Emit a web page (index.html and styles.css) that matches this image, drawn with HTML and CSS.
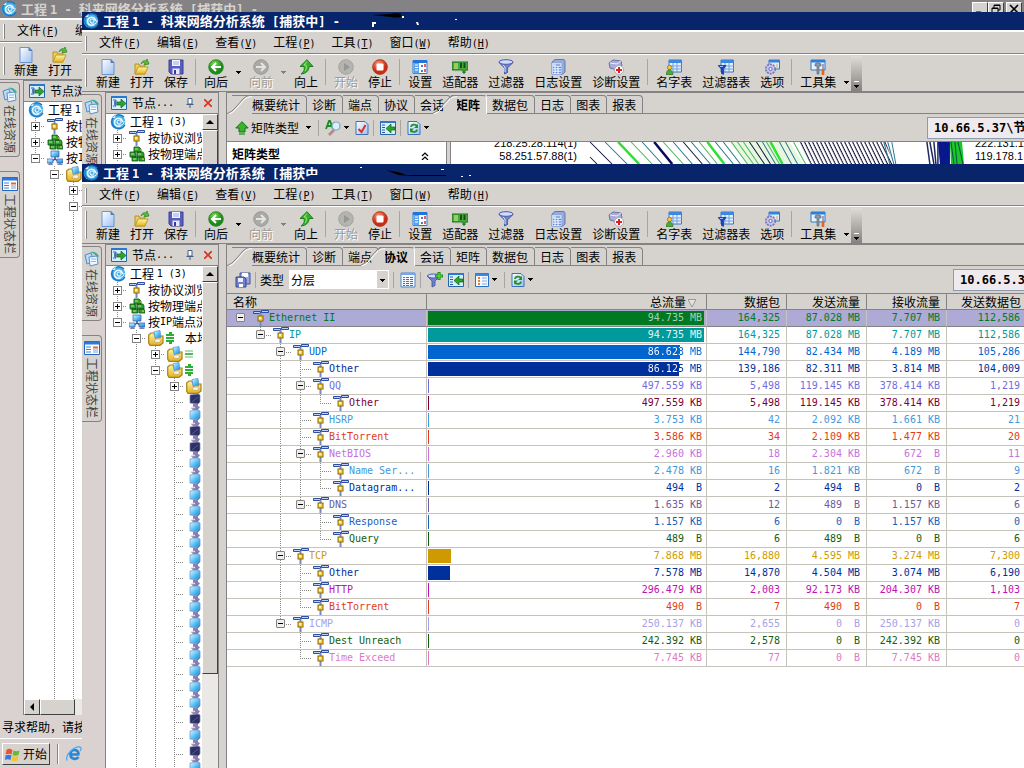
FILE: index.html
```html
<!DOCTYPE html>
<html lang="zh-CN">
<head>
<meta charset="utf-8">
<title>科来网络分析系统</title>
<link rel="stylesheet" href="styles.css">
</head>
<body>
<svg class="defs" aria-hidden="true">
<defs>
<linearGradient id="gs" x1="0" y1="0" x2="1" y2="1"><stop offset="0" stop-color="#e8fbff"/><stop offset=".5" stop-color="#5cc4f4"/><stop offset="1" stop-color="#2a78d0"/></linearGradient>
<linearGradient id="gp" x1="0" y1="0" x2="1" y2="1"><stop offset="0" stop-color="#fff"/><stop offset="1" stop-color="#9cc0f4"/></linearGradient>
<radialGradient id="gg" cx=".4" cy=".3"><stop offset="0" stop-color="#7ee04e"/><stop offset="1" stop-color="#1c8a1c"/></radialGradient>
<radialGradient id="gr" cx=".4" cy=".3"><stop offset="0" stop-color="#ff9a78"/><stop offset="1" stop-color="#cc2c14"/></radialGradient>
<linearGradient id="gy" x1="0" y1="0" x2="0" y2="1"><stop offset="0" stop-color="#fff6a8"/><stop offset="1" stop-color="#e4b01c"/></linearGradient>
<pattern id="hatch" width="4" height="22" patternUnits="userSpaceOnUse" patternTransform="translate(0 142) skewX(26)"><path d="M1 0v22" stroke="#181840" stroke-width="1.200"/></pattern>
</defs>
<symbol id="logo" viewBox="0 0 16 16"><circle cx="8" cy="8" r="7.3" fill="#49aee8"/><path d="M14 3a7 7 0 1 0 1 8" fill="none" stroke="#1878c4" stroke-width="1.4"/><path d="M12.5 8a4 4 0 1 0-1.5 3.4" fill="none" stroke="#e8faff" stroke-width="1.6"/><path d="M7 8a2 2 0 1 1 4 0 2 2 0 0 1-4 0c1 5 7 4 7-1" fill="none" stroke="#e8faff"/><path d="M2 4l4-3-1 3z" fill="#d8f4ff"/></symbol>
<symbol id="new" viewBox="0 0 16 16"><path d="M2 .5h9l3 3v12H2z" fill="url(#gp)" stroke="#6c94c8"/><path d="M11 .5v3h3" fill="#5c88c8" stroke="#5078b0"/></symbol>
<symbol id="open" viewBox="0 0 16 16"><path d="M1 5h4l1 2h5v8H1z" fill="#e8d060" stroke="#b89020"/><path d="M1 15l3-7h10l-3 7z" fill="url(#gy)" stroke="#c09c28"/><path d="M7 5c1-3 3-4 5-3l1-2 2 5-5 1 1-2c-2-1-3 0-4 1z" fill="#58c030" stroke="#28801c" stroke-width=".7"/></symbol>
<symbol id="save" viewBox="0 0 16 16"><path d="M1 1h14v14H3l-2-2z" fill="#5a5cc0" stroke="#3c3c94"/><path d="M4 1h8v6H4z" fill="#f0f4ff"/><path d="M5 3h6M5 5h6" stroke="#a0a8d8"/><path d="M4.500 9.500h7V15h-7z" fill="#e4e8fc"/><path d="M6 11h2v4H6z" fill="#3c3c94"/></symbol>
<symbol id="back" viewBox="0 0 16 16"><circle cx="8" cy="8" r="7.3" fill="url(#gg)" stroke="#287c20" stroke-width=".8"/><path d="M13 8H4M8 4L4 8l4 4" stroke="#fff" stroke-width="2" fill="none"/></symbol>
<symbol id="fwd" viewBox="0 0 16 16"><circle cx="8" cy="8" r="7.3" fill="#a9a9a7" stroke="#999"/><path d="M3 8h9M8 4l4 4-4 4" stroke="#e4e4e0" stroke-width="2" fill="none"/></symbol>
<symbol id="up" viewBox="0 0 16 16"><path d="M9 .7L2 7.500h4c.8 3 0 5-3 7.500 5-.5 8-3 8-7.500h4z" fill="#34b42c" stroke="#177018" stroke-width=".9"/><path d="M9 2.500L6 6h2c1 3 0 5-1 6" stroke="#98ec70" fill="none"/></symbol>
<symbol id="play" viewBox="0 0 16 16"><circle cx="8" cy="8" r="7.3" fill="#b4b4b1" stroke="#a4a4a2"/><path d="M6 4l6 4-6 4z" fill="#979795"/></symbol>
<symbol id="stop" viewBox="0 0 16 16"><circle cx="8" cy="8" r="7.4" fill="url(#gr)" stroke="#a83820" stroke-width=".8"/><rect x="4.500" y="4.500" width="7" height="7" rx="1" fill="#fff"/></symbol>
<symbol id="settings" viewBox="0 0 16 16"><path d="M1 1.500h14v13H1z" fill="#fff" stroke="#2878d4"/><path d="M1 1h14v3H1z" fill="#2074dc"/><path d="M1.500 4H7v10.500H1.500z" fill="#58a4f0"/><path d="M3 6h3M3 8.500h3M3 11h3" stroke="#fff"/><path d="M9 6h2v2H9zM9 11h2v2H9z" fill="#487cc8"/><path d="M12 5h2v3h-2zM12 10h2v3h-2z" fill="#e46058"/></symbol>
<symbol id="adapter" viewBox="0 0 16 16"><path d="M0 3h16v8h-3v3h-2v-3H0z" fill="#48ac38" stroke="#1c6c1c"/><path d="M2 5h4M2 7h4M2 9h4" stroke="#e0f090"/><path d="M8 4h2v5H8zM11.500 4h2v5h-2z" fill="#174c1c"/><path d="M3 12h7" stroke="#c8b030" stroke-dasharray="1 1"/></symbol>
<symbol id="filter" viewBox="0 0 16 16"><path d="M1 3.500L6.500 9v6l3-1.500V9L15 3.500z" fill="#6c84d0" stroke="#3c4c9c" stroke-width=".8"/><ellipse cx="8" cy="3" rx="7" ry="2.300" fill="#cfdcff" stroke="#4858a8"/><path d="M5 6l2 2v5" stroke="#d8e4ff" fill="none"/></symbol>
<symbol id="log" viewBox="0 0 16 16"><path d="M2 3l3-2.500h9L15 2v11l-3 2.500H2z" fill="#94acdc" stroke="#5068a4" stroke-width=".8"/><path d="M2 4h9.500v11.500H2z" fill="#c4d8fc"/><path d="M4 6h6M3 8.500h8M3 11h8M3 13.500h8" stroke="#6484c8"/><path d="M5 5v10M8 7v8" stroke="#fff"/></symbol>
<symbol id="diag" viewBox="0 0 16 16"><path d="M1 4l4-3 8 1 1 5-5 4-7-2z" fill="#a8acd8" stroke="#6c70a8"/><path d="M2 4l7 1 4-3" stroke="#eef" fill="none"/><circle cx="11" cy="11" r="4.500" fill="#fff" stroke="#a8a8b0"/><path d="M11 8v6M8 11h6" stroke="#e02020" stroke-width="2"/></symbol>
<symbol id="grid" viewBox="0 0 16 16"><path d="M3 1h12.500v12H3z" fill="#e4f0ff" stroke="#3c74c4"/><path d="M3 1h13v3H3z" fill="#3c88e0"/><path d="M3 7h13M3 10h13M7 4v9M11 4v9" stroke="#70a0dc"/></symbol>
<symbol id="names" viewBox="0 0 16 16"><use href="#grid"/><circle cx="3.500" cy="8.500" r="2.200" fill="#f0c848" stroke="#786010" stroke-width=".6"/><path d="M0 15.500c0-6 7-6 7 0z" fill="#4cac2c" stroke="#206418" stroke-width=".6"/></symbol>
<symbol id="ftable" viewBox="0 0 16 16"><use href="#grid"/><path d="M0 6.500h8L5.500 10v5.500l-2-1V10z" fill="#2040c4" stroke="#102078" stroke-width=".6"/><path d="M2 7.500h3" stroke="#a0c0ff"/></symbol>
<symbol id="options" viewBox="0 0 16 16"><path d="M5 1h10.500v9H5z" fill="#dcebff" stroke="#3c78c8"/><path d="M5 1h10.500v2.500H5z" fill="#3880dc"/><path d="M12 6h2M12 8h2" stroke="#e0b030"/><circle cx="6.500" cy="10" r="4.700" fill="#c4c4ec" stroke="#7474b4" stroke-width="1.600" stroke-dasharray="2 1"/><circle cx="6.500" cy="10" r="1.600" fill="#fff" stroke="#6464a8"/></symbol>
<symbol id="tools" viewBox="0 0 16 16"><path d="M1 1h14v10H1z" fill="#e4f2ff" stroke="#2c78cc"/><path d="M1 1h14v2.500H1z" fill="#2c80dc"/><path d="M5 5c2-2 5-1 6 0v2H9v8H7V7L5 7z" fill="#8c98a8" stroke="#505c6c" stroke-width=".6"/><path d="M13 5v5" stroke="#889" stroke-width="1.500"/><path d="M13 10v6" stroke="#e46420" stroke-width="2.600"/></symbol>
<symbol id="node" viewBox="0 0 16 14"><path d="M.5.5h15v13H.5z" fill="#d4f0ff" stroke="#2864a8"/><path d="M.5 1h15" stroke="#2c78d0" stroke-width="2"/><path d="M2 4h3v2H3h2v2H3h2v2H2" stroke="#2c58a8" fill="none"/><path d="M6 6h4V3l5 4.500L10 12V9H6z" fill="#2ca42c" stroke="#146414" stroke-width=".7"/></symbol>
<symbol id="import" viewBox="0 0 16 14"><path d="M.5.5h15v13H.5z" fill="#d4f0ff" stroke="#2864a8"/><path d="M.5 1h15" stroke="#2c78d0" stroke-width="2"/><path d="M2 4h3M2 6.500h3M2 9h3M2 11.500h3" stroke="#2c58a8"/><path d="M15 6h-4V3L6 7.500 11 12V9h4z" fill="#2ca42c" stroke="#146414" stroke-width=".7"/></symbol>
<symbol id="proto" viewBox="0 0 16 16"><path d="M.5 1.500h7v2h-7zM8.500.5h7v2h-7z" fill="#b8d4fc" stroke="#1c3c94" stroke-width=".9"/><path d="M7.500 3v3M7.500 11v5" stroke="#7888c4" stroke-width="2"/><rect x="5" y="6" width="5" height="5" fill="#f8d038" stroke="#8c6808"/><path d="M6 7h2v2H6z" fill="#fff4a8"/></symbol>
<symbol id="phys" viewBox="0 0 16 16"><g fill="#34a034" stroke="#0c500c" stroke-width=".8"><path d="M5 1h5l2 2v3H5zM1 6h5l1 2v3H1zM8 6h6l1 2v3H8zM3 11h6v4H3zM10 11h5l1 4h-6z"/></g><path d="M6 3h3M2 8h3M9 8h3M4 13h3" stroke="#a8f08c"/><path d="M13 13h2M11 4h1" stroke="#e4e040"/></symbol>
<symbol id="ipn" viewBox="0 0 16 16"><path d="M8 6v4M4 12l4-3 4 3" stroke="#444c94" stroke-width="1.500" fill="none"/><path d="M4 1h8v6H4z" fill="url(#gs)" stroke="#4468b4" stroke-width=".8"/><path d="M0 9h6v4H0zM10 9h6v4h-6z" fill="url(#gs)" stroke="#4468b4" stroke-width=".8"/><path d="M1 15h5l-1-2H2zM10 15h6l-2-2h-2z" fill="#8080b4"/></symbol>
<symbol id="folder" viewBox="0 0 16 16"><path d="M.7 5L3 3h3l1 3h8v7l-3 2.300H2L.7 13z" fill="url(#gy)" stroke="#ac8010" stroke-width="1.200"/><path d="M6 1.500l6-1 1 7-6 1z" fill="url(#gs)" stroke="#5c90cc" stroke-width=".7"/><path d="M6 12c1-4 6-4 7-1l-2 1.500z" fill="#f6f1e4" stroke="#b89c58" stroke-width=".6"/></symbol>
<symbol id="pc" viewBox="0 0 12 16"><path d="M1 1l8-1 2 1v7l-2 2-8-1z" fill="url(#gs)" stroke="#6490cc" stroke-width=".7"/><path d="M4 10h5v2l2 1-2 3H4l-2-2 2-1z" fill="#8880ac"/><path d="M3 13.500h3" stroke="#e4d8f4" stroke-width="1.500"/></symbol>
<symbol id="pcd" viewBox="0 0 12 16"><path d="M1 1l8-1 2 1v7l-2 2-8-1z" fill="#2c3064" stroke="#7c80b0" stroke-width=".7"/><path d="M3 8l6-5" stroke="#565c94"/><path d="M4 10h5v2l2 1-2 3H4l-2-2 2-1z" fill="#8880ac"/><path d="M3 13.500h3" stroke="#e4d8f4" stroke-width="1.500"/></symbol>
<symbol id="sig" viewBox="0 0 10 14"><path d="M4 1h3v2h2v2H1V3h3zM1 6h8v2H1zM1 9h8v2H7v2H4v-2H1z" fill="#2cb034"/></symbol>
<symbol id="sig2" viewBox="0 0 10 14"><path d="M1 3h8v2H1zM1 9h8v2H1z" fill="#b4dcbc"/><path d="M1 6h8v2H1z" fill="#50b85c"/></symbol>
<symbol id="docs" viewBox="0 0 16 16"><path d="M1 4l6-2 3 8-7 3z" fill="#b8dcfc" stroke="#5888bc"/><path d="M5 6l8-1 1 8-8 2z" fill="#eef7ff" stroke="#5c90c4"/><path d="M6 1c4-1 8 1 9 5l-3-1c-1-2-3-3-6-4z" fill="#38aca4"/><path d="M7 8h5M7 10.500h5" stroke="#94b8dc"/></symbol>
<symbol id="layout" viewBox="0 0 16 14"><path d="M.5.5h15v13H.5z" fill="#fff" stroke="#2464bc"/><path d="M.5.5h15v3H.5z" fill="#2c78dc"/><path d="M2 6h5M2 8.500h5M2 11h5" stroke="#3c84d8"/><path d="M9 5.500h5v2H9z" fill="#e46434"/><path d="M9 9h5M9 11h5" stroke="#70a4e0"/></symbol>
<symbol id="pin" viewBox="0 0 8 10"><path d="M2 .5h4V6H2zM.5 6.500h7M4 7v3" fill="#fff" stroke="#425e88"/></symbol>
<symbol id="x" viewBox="0 0 8 8"><path d="M0 0l8 8M8 0L0 8" stroke="#d83420" stroke-width="1.700"/></symbol>
<symbol id="gup" viewBox="0 0 14 14"><path d="M7 .7L.8 7H4v4h6V7h3.200z" fill="#38b428" stroke="#187018"/><path d="M4 13h6" stroke="#38a030" stroke-width="1.500"/></symbol>
<symbol id="find" viewBox="0 0 16 16"><path d="M1 9l3-8h1l3 8M2.500 6h4" fill="none" stroke="#188c24" stroke-width="1.800"/><path d="M9 10l-5 5" stroke="#b08888" stroke-width="2.600"/><circle cx="11" cy="6" r="4" fill="#d8f2fc" stroke="#7ca4bc" stroke-width="1.200"/></symbol>
<symbol id="check" viewBox="0 0 13 14"><path d="M.5.5h9l3 3v10H.5z" fill="url(#gp)" stroke="#3c70bc"/><path d="M3 8l3 3 4-7" fill="none" stroke="#e03020" stroke-width="2"/></symbol>
<symbol id="refresh" viewBox="0 0 13 14"><path d="M.5.5h9l3 3v10H.5z" fill="url(#gp)" stroke="#3c70bc"/><path d="M3.500 6c0-3 5-3 6-1M9.500 8.500c0 3-5 3-6 1" fill="none" stroke="#1c9424" stroke-width="1.700"/><path d="M10.500 3v4h-4zM2.500 11.500v-4h4z" fill="#1c9424"/></symbol>
<symbol id="copysave" viewBox="0 0 16 16"><path d="M5 1h10v11H5z" fill="#98a8e0" stroke="#404c9c"/><path d="M7 1h6v4H7z" fill="#fff"/><path d="M1 5h8l2 2v8H1z" fill="#7080cc" stroke="#38448c"/><path d="M3 6h5v4H3z" fill="#eaf0ff"/><path d="M4 12h4v3H4z" fill="#fff"/></symbol>
<symbol id="list" viewBox="0 0 16 16"><path d="M1 1h14v14H1z" fill="#f4faff" stroke="#5084c8"/><path d="M1 1h14v2H1z" fill="#74a8ec"/><path d="M3 5.500h2M3 7.500h2M3 9.500h2M3 11.500h2M3 13.500h2M6 5.500h3M6 7.500h3M6 9.500h3M6 11.500h3M6 13.500h3M10 5.500h3M10 7.500h3M10 9.500h3M10 11.500h3M10 13.500h3" stroke="#2c80b0"/></symbol>
<symbol id="filterp" viewBox="0 0 16 16"><path d="M0 4l5 5v6l3-1.500V9l5-5z" fill="#6c84d0" stroke="#3c4c9c" stroke-width=".8"/><ellipse cx="6.500" cy="4" rx="6" ry="2" fill="#cfdcff" stroke="#4858a8"/><path d="M12 0v8M8 4h8" stroke="#1c9420" stroke-width="3.200"/><path d="M12 1v6M9 4h6" stroke="#70e048"/></symbol>
<symbol id="cols" viewBox="0 0 14 14"><path d="M.5.5h13v13H.5z" fill="#f4faff" stroke="#2c70c4"/><path d="M.5.5h13v2.500H.5z" fill="#3c88e4"/><path d="M3 5h2M3 8h2M3 11h2" stroke="#e4803c" stroke-width="2"/><path d="M7 5h5M7 8h5M7 11h5" stroke="#84a8d8"/></symbol>
<symbol id="ie" viewBox="0 0 16 16"><path d="M13.500 8.500H4.500c0 5 6 5.500 8 2.500" fill="none" stroke="#2488d8" stroke-width="2.600"/><path d="M4.500 8.500c0-6 8-6 8-.5" fill="none" stroke="#2488d8" stroke-width="2.600"/><path d="M1 14.500C-1 9 8 0 14 1c2 1 1 3 0 4" fill="none" stroke="#4ca8ec" stroke-width="1.300"/></symbol>
<symbol id="flag" viewBox="0 0 16 16"><path d="M1.500 4c2-2 4-1 6 0L6.500 8.500c-2-1-4-1-6 0z" fill="#e8552c"/><path d="M8.500 4.500c2 1 4 1 6 0L13.500 9c-2 1-4 1-6 0z" fill="#68b838"/><path d="M.5 9.500c2-1 4-1 6 0L5.500 14c-2-1-4-1-5.500 0z" fill="#3878dc"/><path d="M7.500 10c2 1 4 1 6 0l-1 4.500c-2 1-4 1-6 0z" fill="#f4c428"/></symbol>
<symbol id="slope" viewBox="0 0 24 19"><path d="M14 19V9l5-7 5-1v18z" fill="#d6d3ce"/><path d="M0 18.500h24" stroke="#d6d3ce"/><path d="M0 18Q4 17 7 13L16 3Q18 .5 24 .5" fill="none" stroke="#848284"/><path d="M1 19Q5 18 8 14L17 4Q19 1.500 24 1.500" fill="none" stroke="#fff"/></symbol>
</svg>

<main class="desktop">

<section class="win win-back">
  <header class="title"><svg class="i16"><use href="#logo"/></svg><h1>工程 <span>1 - </span>科来网络分析系统<span> [</span>捕获中<span>] -</span></h1>
    <div class="sysbtns"><button aria-label="最小化"><svg viewBox="0 0 10 10"><path d="M1 8.500h5" stroke="#000" stroke-width="2"/></svg></button><button aria-label="还原"><svg viewBox="0 0 10 10"><path d="M3 1h6v5H7M3 1.500h6M1 4h6v5H1zM1 4.500h6M3 1v3" stroke="#000" fill="none"/></svg></button><button class="gap" aria-label="关闭"><svg viewBox="0 0 10 10"><path d="M1 1l8 8M9 1L1 9" stroke="#000" stroke-width="1.600"/></svg></button></div>
  </header>
  <nav class="menu"><button>文件<span>(<u>F</u>)</span></button><button>编辑<span>(<u>E</u>)</span></button></nav>
  <div class="tools"><button><svg class="i16"><use href="#new"/></svg>新建</button><button><svg class="i16"><use href="#open"/></svg>打开</button></div>
  <div class="work">
    <aside class="side"><button><svg class="i16"><use href="#docs"/></svg><span>在线资源</span></button><button><svg class="i16"><use href="#layout"/></svg><span>工程状态栏</span></button></aside>
    <section class="panel wide">
      <h2><svg class="i16"><use href="#node"/></svg>节点浏览器</h2>
      <div class="scroller">
      <ul class="tree">
        <li class="root"><svg class="i16"><use href="#logo"/></svg>工程&nbsp;<span class="m">1</span></li>
        <li><i class="t"><button class="ex plus" aria-label="展开"></button></i><svg class="i16"><use href="#proto"/></svg>按协议浏览</li>
        <li><i class="t"><button class="ex plus" aria-label="展开"></button></i><svg class="i16"><use href="#phys"/></svg>按物理端点</li>
        <li><i class="l"><button class="ex" aria-label="折叠"></button></i><svg class="i16"><use href="#ipn"/></svg>按<span class="m">IP</span>端点浏览</li>
        <li><i></i><i class="t"><button class="ex" aria-label="折叠"></button></i><svg class="i16"><use href="#folder"/></svg></li>
        <li><i></i><i class="v"></i><i class="t"><button class="ex plus" aria-label="展开"></button></i></li>
        <li><i></i><i class="v"></i><i class="t"><button class="ex" aria-label="折叠"></button></i></li>
        <li class="rest"><i></i><i class="v"></i><i class="v"></i></li>
      </ul>
      <div class="hscroll"><button class="arrow" aria-label="向左滚动"><svg viewBox="0 0 8 8"><path d="M6 0v8L2 4z"/></svg></button><span class="thumb"></span></div>
      </div>
    </section>
  </div>
  <footer class="status">寻求帮助，请按</footer>
</section>

<footer class="taskbar"><button class="start"><svg class="i16"><use href="#flag"/></svg>开始</button><span class="handle"></span><svg class="i16"><use href="#ie"/></svg></footer>

<section class="win win-matrix">
  <header class="title"><svg class="i16"><use href="#logo"/></svg><h1>工程 <span>1 - </span>科来网络分析系统<span> [</span>捕获中<span>] -</span></h1>
    <svg class="marks" width="130" height="18" viewBox="0 0 130 18"><path d="M32 3l18-1q8-2 11 0v3q-6 1-10 0z" fill="#000"/><path d="M32 10h4v2h-2v3h-2zM62 4h2v2h-2zM76 10h2l1 3h-2zM115 7h2v1h-2z" fill="#fff"/></svg>
  </header>
  <nav class="menu"><button>文件<span>(<u>F</u>)</span></button><button>编辑<span>(<u>E</u>)</span></button><button>查看<span>(<u>V</u>)</span></button><button>工程<span>(<u>P</u>)</span></button><button>工具<span>(<u>T</u>)</span></button><button>窗口<span>(<u>W</u>)</span></button><button>帮助<span>(<u>H</u>)</span></button></nav>
  <div class="tools">
    <button><svg class="i16"><use href="#new"/></svg>新建</button><button><svg class="i16"><use href="#open"/></svg>打开</button><button><svg class="i16"><use href="#save"/></svg>保存</button><hr>
    <button><svg class="i16"><use href="#back"/></svg>向后</button><b class="drop"></b><button disabled><svg class="i16"><use href="#fwd"/></svg>向前</button><b class="drop off"></b><button><svg class="i16"><use href="#up"/></svg>向上</button><hr>
    <button disabled><svg class="i16"><use href="#play"/></svg>开始</button><button><svg class="i16"><use href="#stop"/></svg>停止</button><hr>
    <button><svg class="i16"><use href="#settings"/></svg>设置</button><button><svg class="i16"><use href="#adapter"/></svg>适配器</button><button><svg class="i16"><use href="#filter"/></svg>过滤器</button><button><svg class="i16"><use href="#log"/></svg>日志设置</button><button><svg class="i16"><use href="#diag"/></svg>诊断设置</button><hr>
    <button><svg class="i16"><use href="#names"/></svg>名字表</button><button><svg class="i16"><use href="#ftable"/></svg>过滤器表</button><button><svg class="i16"><use href="#options"/></svg>选项</button><hr>
    <button><svg class="i16"><use href="#tools"/></svg>工具集</button><b class="drop"></b><span class="more"></span>
  </div>
  <div class="work">
    <aside class="side"><button><svg class="i16"><use href="#docs"/></svg><span>在线资源</span></button></aside>
    <section class="panel">
      <h2><svg class="i16"><use href="#node"/></svg>节点<span class="m">...</span><svg class="pin"><use href="#pin"/></svg><svg class="x"><use href="#x"/></svg></h2>
      <div class="scroller row">
      <ul class="tree">
        <li class="root"><svg class="i16"><use href="#logo"/></svg>工程&nbsp;<span class="m">1 (3)</span></li>
        <li><i class="t"><button class="ex plus" aria-label="展开"></button></i><svg class="i16"><use href="#proto"/></svg>按协议浏览</li>
        <li><i class="t"><button class="ex plus" aria-label="展开"></button></i><svg class="i16"><use href="#phys"/></svg>按物理端点</li>
      </ul>
      <div class="vscroll"><button class="arrow" aria-label="向上滚动"><svg viewBox="0 0 8 8"><path d="M0 6h8L4 2z"/></svg></button><span class="thumb"></span></div>
      </div>
    </section>
    <section class="pane">
      <nav class="tabs"><button class="first"><svg class="slant"><use href="#slope"/></svg>概要统计</button><button>诊断</button><button>端点</button><button>协议</button><button>会话</button><button class="sel"><svg class="slant"><use href="#slope"/></svg>矩阵</button><button>数据包</button><button>日志</button><button>图表</button><button>报表</button></nav>
      <div class="bar2">
        <svg class="i14"><use href="#gup"/></svg><span>矩阵类型</span><b class="drop"></b><hr><svg class="i16"><use href="#find"/></svg><b class="drop"></b><svg class="i14"><use href="#check"/></svg><hr><svg class="i16"><use href="#import"/></svg><hr><svg class="i14"><use href="#refresh"/></svg><b class="drop"></b>
        <div class="addr">10.66.5.37\节</div>
      </div>
      <div class="split">
        <h3 class="mtype">矩阵类型<svg class="chev" viewBox="0 0 8 8"><path d="M1 4l3-3 3 3M1 8l3-3 3 3" fill="none" stroke="#000" stroke-width="1.200"/></svg></h3>
        <div class="matrix">
          <ul class="hosts right"><li>218.25.28.114(1)</li><li>58.251.57.88(1)</li></ul>
          <svg class="lines" viewBox="590 142 380 22" preserveAspectRatio="none">
            <path d="M730 142h60l14 22h-56z" fill="#e8f8e0"/>
            <path d="M591 142l22 22M591 157l7 7M684 142l19 22M750 142l15 22M757 142l14 22" stroke="#181840" fill="none"/>
            <path d="M606 142l22 22M643 142l20 22M674 142l19 22M692 142l19 22M716 142l18 22M724 142l17 22M763 142l13 22M780 142l12 22M786 142l12 22" stroke="#2c7890" fill="none"/>
            <path d="M632 142l21 22M664 142l20 22M700 142l18 22M732 142l16 22M738 142l16 22M744 142l15 22M767 142l13 22M794 142l12 22" stroke="#48b858" fill="none"/>
            <path d="M619 142l21 22M708 142l17 22M771 142l12 22" stroke="#30e030" stroke-width="2.500" fill="none"/>
            <path d="M655 142l18 22" stroke="#080c58" stroke-width="2.500" fill="none"/>
            <path d="M798 142h88l8 22h-84z" fill="url(#hatch)"/>
            <path d="M884 142l6 22M888 142l6 22M892 142l4 22" stroke="#2c7890" fill="none"/>
            <path d="M927 142l3 22M930 142l4 22M934 142l2 22M938 142v22" stroke="#202860" stroke-width="1.500" fill="none"/>
            <path d="M938 142h12v22h-10z" fill="#08188c"/><path d="M950 142h12l2 22h-13z" fill="#18c828"/><path d="M951 142l3 22M955 142l2 22M958 142l5 22" stroke="#104c48" fill="none"/>
          </svg>
          <ul class="hosts"><li>222.131.1</li><li>119.178.1</li></ul>
        </div>
      </div>
    </section>
  </div>
</section>

<section class="win win-proto">
  <header class="title"><svg class="i16"><use href="#logo"/></svg><h1>工程 <span>1 - </span>科来网络分析系统<span> [</span>捕获中</h1>
    <svg class="marks" width="170" height="18" viewBox="0 0 170 18"><path d="M0 11h14v7H0z" fill="#08246b"/><path d="M76 6l12 2 8 3h40v1h-34l-14-1z" fill="#000"/><path d="M50 3h2v1h-2zM131 5h3v1h-3zM151 12h2v1h-2zM159 11h2v1h-2z" fill="#fff"/></svg>
  </header>
  <nav class="menu"><button>文件<span>(<u>F</u>)</span></button><button>编辑<span>(<u>E</u>)</span></button><button>查看<span>(<u>V</u>)</span></button><button>工程<span>(<u>P</u>)</span></button><button>工具<span>(<u>T</u>)</span></button><button>窗口<span>(<u>W</u>)</span></button><button>帮助<span>(<u>H</u>)</span></button></nav>
  <div class="tools">
    <button><svg class="i16"><use href="#new"/></svg>新建</button><button><svg class="i16"><use href="#open"/></svg>打开</button><button><svg class="i16"><use href="#save"/></svg>保存</button><hr>
    <button><svg class="i16"><use href="#back"/></svg>向后</button><b class="drop"></b><button disabled><svg class="i16"><use href="#fwd"/></svg>向前</button><b class="drop off"></b><button><svg class="i16"><use href="#up"/></svg>向上</button><hr>
    <button disabled><svg class="i16"><use href="#play"/></svg>开始</button><button><svg class="i16"><use href="#stop"/></svg>停止</button><hr>
    <button><svg class="i16"><use href="#settings"/></svg>设置</button><button><svg class="i16"><use href="#adapter"/></svg>适配器</button><button><svg class="i16"><use href="#filter"/></svg>过滤器</button><button><svg class="i16"><use href="#log"/></svg>日志设置</button><button><svg class="i16"><use href="#diag"/></svg>诊断设置</button><hr>
    <button><svg class="i16"><use href="#names"/></svg>名字表</button><button><svg class="i16"><use href="#ftable"/></svg>过滤器表</button><button><svg class="i16"><use href="#options"/></svg>选项</button><hr>
    <button><svg class="i16"><use href="#tools"/></svg>工具集</button><b class="drop"></b><span class="more"></span>
  </div>
  <div class="work">
    <aside class="side"><button><svg class="i16"><use href="#docs"/></svg><span>在线资源</span></button><button><svg class="i16"><use href="#layout"/></svg><span>工程状态栏</span></button></aside>
    <section class="panel">
      <h2><svg class="i16"><use href="#node"/></svg>节点<span class="m">...</span><svg class="pin"><use href="#pin"/></svg><svg class="x"><use href="#x"/></svg></h2>
      <div class="scroller row">
      <ul class="tree">
        <li class="root"><svg class="i16"><use href="#logo"/></svg>工程&nbsp;<span class="m">1 (3)</span></li>
        <li><i class="t"><button class="ex plus" aria-label="展开"></button></i><svg class="i16"><use href="#proto"/></svg>按协议浏览</li>
        <li><i class="t"><button class="ex plus" aria-label="展开"></button></i><svg class="i16"><use href="#phys"/></svg>按物理端点</li>
        <li><i class="l"><button class="ex" aria-label="折叠"></button></i><svg class="i16"><use href="#ipn"/></svg>按<span class="m">IP</span>端点浏览</li>
        <li><i></i><i class="t"><button class="ex" aria-label="折叠"></button></i><svg class="i16"><use href="#folder"/></svg><svg class="sig"><use href="#sig"/></svg><span class="local">本地</span></li>
        <li><i></i><i class="v"></i><i class="t"><button class="ex plus" aria-label="展开"></button></i><svg class="i16"><use href="#folder"/></svg><svg class="sig"><use href="#sig2"/></svg></li>
        <li><i></i><i class="v"></i><i class="t"><button class="ex" aria-label="折叠"></button></i><svg class="i16"><use href="#folder"/></svg><svg class="sig"><use href="#sig"/></svg></li>
        <li><i></i><i class="v"></i><i class="v"></i><i class="t"><button class="ex plus" aria-label="展开"></button></i><svg class="i16"><use href="#folder"/></svg></li>
        <li><i></i><i class="v"></i><i class="v"></i><i class="t"></i><svg class="pc"><use href="#pcd"/></svg></li>
        <li><i></i><i class="v"></i><i class="v"></i><i class="t"></i><svg class="pc"><use href="#pc"/></svg></li>
        <li><i></i><i class="v"></i><i class="v"></i><i class="t"></i><svg class="pc"><use href="#pcd"/></svg></li>
        <li><i></i><i class="v"></i><i class="v"></i><i class="t"></i><svg class="pc"><use href="#pcd"/></svg></li>
        <li><i></i><i class="v"></i><i class="v"></i><i class="t"></i><svg class="pc"><use href="#pc"/></svg></li>
        <li><i></i><i class="v"></i><i class="v"></i><i class="t"></i><svg class="pc"><use href="#pc"/></svg></li>
        <li><i></i><i class="v"></i><i class="v"></i><i class="t"></i><svg class="pc"><use href="#pc"/></svg></li>
        <li><i></i><i class="v"></i><i class="v"></i><i class="t"></i><svg class="pc"><use href="#pc"/></svg></li>
        <li><i></i><i class="v"></i><i class="v"></i><i class="t"></i><svg class="pc"><use href="#pc"/></svg></li>
        <li><i></i><i class="v"></i><i class="v"></i><i class="t"></i><svg class="pc"><use href="#pc"/></svg></li>
        <li><i></i><i class="v"></i><i class="v"></i><i class="t"></i><svg class="pc"><use href="#pc"/></svg></li>
        <li><i></i><i class="v"></i><i class="v"></i><i class="t"></i><svg class="pc"><use href="#pc"/></svg></li>
        <li><i></i><i class="v"></i><i class="v"></i><i class="t"></i><svg class="pc"><use href="#pc"/></svg></li>
        <li><i></i><i class="v"></i><i class="v"></i><i class="t"></i><svg class="pc"><use href="#pc"/></svg></li>
        <li><i></i><i class="v"></i><i class="v"></i><i class="t"></i><svg class="pc"><use href="#pc"/></svg></li>
        <li><i></i><i class="v"></i><i class="v"></i><i class="t"></i><svg class="pc"><use href="#pc"/></svg></li>
        <li><i></i><i class="v"></i><i class="v"></i><i class="t"></i><svg class="pc"><use href="#pc"/></svg></li>
        <li><i></i><i class="v"></i><i class="v"></i><i class="t"></i><svg class="pc"><use href="#pc"/></svg></li>
        <li><i></i><i class="v"></i><i class="v"></i><i class="t"></i><svg class="pc"><use href="#pc"/></svg></li>
        <li><i></i><i class="v"></i><i class="v"></i><i class="t"></i><svg class="pc"><use href="#pc"/></svg></li>
        <li><i></i><i class="v"></i><i class="v"></i><i class="t"></i><svg class="pc"><use href="#pcd"/></svg></li>
        <li><i></i><i class="v"></i><i class="v"></i><i class="t"></i><svg class="pc"><use href="#pc"/></svg></li>
        <li><i></i><i class="v"></i><i class="v"></i><i class="t"></i><svg class="pc"><use href="#pcd"/></svg></li>
        <li><i></i><i class="v"></i><i class="v"></i><i class="t"></i><svg class="pc"><use href="#pc"/></svg></li>
      </ul>
      <div class="vscroll"><button class="arrow" aria-label="向上滚动"><svg viewBox="0 0 8 8"><path d="M0 6h8L4 2z"/></svg></button><span class="thumb"></span></div>
      </div>
    </section>
    <section class="pane">
      <nav class="tabs"><button class="first"><svg class="slant"><use href="#slope"/></svg>概要统计</button><button>诊断</button><button>端点</button><button class="sel"><svg class="slant"><use href="#slope"/></svg>协议</button><button>会话</button><button>矩阵</button><button>数据包</button><button>日志</button><button>图表</button><button>报表</button></nav>
      <div class="bar2">
        <svg class="i16"><use href="#copysave"/></svg><hr><label for="kind">类型</label><select id="kind"><option>分层</option></select><hr><svg class="i16"><use href="#list"/></svg><hr><svg class="i16"><use href="#filterp"/></svg><svg class="i16"><use href="#import"/></svg><hr><svg class="i14"><use href="#cols"/></svg><b class="drop"></b><hr><svg class="i14"><use href="#refresh"/></svg><b class="drop"></b>
        <div class="addr short">10.66.5.37\</div>
      </div>
      <div class="gridwrap">
      <table>
        <colgroup><col class="c1"><col class="c2"><col class="c3"><col class="c3"><col class="c3"><col></colgroup>
        <thead><tr><th>名称</th><th>总流量<svg class="sort" viewBox="0 0 8 8"><path d="M0 .5h8L4 8z" fill="#e4e2de" stroke="#999"/></svg></th><th>数据包</th><th>发送流量</th><th>接收流量</th><th>发送数据包</th></tr></thead>
        <tbody>
        <tr class="k-green cur"><td><div class="n"><i><button class="ex" aria-label="折叠"></button></i><svg class="i16"><use href="#proto"/></svg>Ethernet II</div></td><td><div class="meter in"><s style="width:100%"></s><span>94.735 MB</span></div></td><td>164,325</td><td>87.028 MB</td><td>7.707 MB</td><td>112,586</td></tr>
        <tr class="k-teal"><td><div class="n"><i></i><i class="l"><button class="ex" aria-label="折叠"></button></i><svg class="i16"><use href="#proto"/></svg>IP</div></td><td><div class="meter in"><s style="width:100%"></s><span>94.735 MB</span></div></td><td>164,325</td><td>87.028 MB</td><td>7.707 MB</td><td>112,586</td></tr>
        <tr class="k-blue"><td><div class="n"><i></i><i></i><i class="t"><button class="ex" aria-label="折叠"></button></i><svg class="i16"><use href="#proto"/></svg>UDP</div></td><td><div class="meter part" style="--w:91.4%"><s style="width:91.4%"></s><span>86.623 MB</span></div></td><td>144,790</td><td>82.434 MB</td><td>4.189 MB</td><td>105,286</td></tr>
        <tr class="k-navy"><td><div class="n"><i></i><i></i><i class="v"></i><i class="t"></i><svg class="i16"><use href="#proto"/></svg>Other</div></td><td><div class="meter part" style="--w:90.9%"><s style="width:90.9%"></s><span>86.125 MB</span></div></td><td>139,186</td><td>82.311 MB</td><td>3.814 MB</td><td>104,009</td></tr>
        <tr class="k-violet"><td><div class="n"><i></i><i></i><i class="v"></i><i class="t"><button class="ex" aria-label="折叠"></button></i><svg class="i16"><use href="#proto"/></svg>QQ</div></td><td><div class="meter"><s style="width:0.5%"></s><span>497.559 KB</span></div></td><td>5,498</td><td>119.145 KB</td><td>378.414 KB</td><td>1,219</td></tr>
        <tr class="k-wine"><td><div class="n"><i></i><i></i><i class="v"></i><i class="v"></i><i class="l"></i><svg class="i16"><use href="#proto"/></svg>Other</div></td><td><div class="meter"><s style="width:0.5%"></s><span>497.559 KB</span></div></td><td>5,498</td><td>119.145 KB</td><td>378.414 KB</td><td>1,219</td></tr>
        <tr class="k-sky"><td><div class="n"><i></i><i></i><i class="v"></i><i class="t"></i><svg class="i16"><use href="#proto"/></svg>HSRP</div></td><td><div class="meter"><s style="width:0%"></s><span>3.753 KB</span></div></td><td>42</td><td>2.092 KB</td><td>1.661 KB</td><td>21</td></tr>
        <tr class="k-red"><td><div class="n"><i></i><i></i><i class="v"></i><i class="t"></i><svg class="i16"><use href="#proto"/></svg>BitTorrent</div></td><td><div class="meter"><s style="width:0%"></s><span>3.586 KB</span></div></td><td>34</td><td>2.109 KB</td><td>1.477 KB</td><td>20</td></tr>
        <tr class="k-orchid"><td><div class="n"><i></i><i></i><i class="v"></i><i class="t"><button class="ex" aria-label="折叠"></button></i><svg class="i16"><use href="#proto"/></svg>NetBIOS</div></td><td><div class="meter"><s style="width:0%"></s><span>2.960 KB</span></div></td><td>18</td><td>2.304 KB</td><td>672  B</td><td>11</td></tr>
        <tr class="k-sky"><td><div class="n"><i></i><i></i><i class="v"></i><i class="v"></i><i class="t"></i><svg class="i16"><use href="#proto"/></svg>Name Ser...</div></td><td><div class="meter"><s style="width:0%"></s><span>2.478 KB</span></div></td><td>16</td><td>1.821 KB</td><td>672  B</td><td>9</td></tr>
        <tr class="k-navy"><td><div class="n"><i></i><i></i><i class="v"></i><i class="v"></i><i class="l"></i><svg class="i16"><use href="#proto"/></svg>Datagram...</div></td><td><div class="meter"><s style="width:0%"></s><span>494  B</span></div></td><td>2</td><td>494  B</td><td>0  B</td><td>2</td></tr>
        <tr class="k-slate"><td><div class="n"><i></i><i></i><i class="v"></i><i class="l"><button class="ex" aria-label="折叠"></button></i><svg class="i16"><use href="#proto"/></svg>DNS</div></td><td><div class="meter"><s style="width:0%"></s><span>1.635 KB</span></div></td><td>12</td><td>489  B</td><td>1.157 KB</td><td>6</td></tr>
        <tr class="k-azure"><td><div class="n"><i></i><i></i><i class="v"></i><i></i><i class="t"></i><svg class="i16"><use href="#proto"/></svg>Response</div></td><td><div class="meter"><s style="width:0%"></s><span>1.157 KB</span></div></td><td>6</td><td>0  B</td><td>1.157 KB</td><td>0</td></tr>
        <tr class="k-forest"><td><div class="n"><i></i><i></i><i class="v"></i><i></i><i class="l"></i><svg class="i16"><use href="#proto"/></svg>Query</div></td><td><div class="meter"><s style="width:0%"></s><span>489  B</span></div></td><td>6</td><td>489  B</td><td>0  B</td><td>6</td></tr>
        <tr class="k-gold"><td><div class="n"><i></i><i></i><i class="t"><button class="ex" aria-label="折叠"></button></i><svg class="i16"><use href="#proto"/></svg>TCP</div></td><td><div class="meter"><s style="width:8.3%"></s><span>7.868 MB</span></div></td><td>16,880</td><td>4.595 MB</td><td>3.274 MB</td><td>7,300</td></tr>
        <tr class="k-navy"><td><div class="n"><i></i><i></i><i class="v"></i><i class="t"></i><svg class="i16"><use href="#proto"/></svg>Other</div></td><td><div class="meter"><s style="width:8%"></s><span>7.578 MB</span></div></td><td>14,870</td><td>4.504 MB</td><td>3.074 MB</td><td>6,190</td></tr>
        <tr class="k-magenta"><td><div class="n"><i></i><i></i><i class="v"></i><i class="t"></i><svg class="i16"><use href="#proto"/></svg>HTTP</div></td><td><div class="meter"><s style="width:0.3%"></s><span>296.479 KB</span></div></td><td>2,003</td><td>92.173 KB</td><td>204.307 KB</td><td>1,103</td></tr>
        <tr class="k-red"><td><div class="n"><i></i><i></i><i class="v"></i><i class="l"></i><svg class="i16"><use href="#proto"/></svg>BitTorrent</div></td><td><div class="meter"><s style="width:0%"></s><span>490  B</span></div></td><td>7</td><td>490  B</td><td>0  B</td><td>7</td></tr>
        <tr class="k-lilac"><td><div class="n"><i></i><i></i><i class="l"><button class="ex" aria-label="折叠"></button></i><svg class="i16"><use href="#proto"/></svg>ICMP</div></td><td><div class="meter"><s style="width:0.3%"></s><span>250.137 KB</span></div></td><td>2,655</td><td>0  B</td><td>250.137 KB</td><td>0</td></tr>
        <tr class="k-forest"><td><div class="n"><i></i><i></i><i></i><i class="t"></i><svg class="i16"><use href="#proto"/></svg>Dest Unreach</div></td><td><div class="meter"><s style="width:0.3%"></s><span>242.392 KB</span></div></td><td>2,578</td><td>0  B</td><td>242.392 KB</td><td>0</td></tr>
        <tr class="k-pink"><td><div class="n"><i></i><i></i><i></i><i class="l"></i><svg class="i16"><use href="#proto"/></svg>Time Exceed</div></td><td><div class="meter"><s style="width:0%"></s><span>7.745 KB</span></div></td><td>77</td><td>0  B</td><td>7.745 KB</td><td>0</td></tr>
        </tbody>
      </table>
      </div>
    </section>
  </div>
</section>
</main>
</body>
</html>
```
FILE: styles.css
```css
:root {
  --face: #d6d3ce;
  --navy: #08246b;
  --line: #848284;
  --mono: "DejaVu Sans Mono", "Noto Sans CJK SC", monospace;
}
* { box-sizing: border-box; }
html, body { height: 100%; }
body { margin: 0; overflow: hidden; font: 12px/16px "Noto Sans CJK SC", sans-serif; color: #000; background: var(--face); }
button { margin: 0; padding: 0; border: 0; background: none; font: inherit; color: inherit; }
ul { margin: 0; padding: 0; list-style: none; }
h1, h2, h3 { margin: 0; font-size: 12px; font-weight: 400; }
svg { display: block; flex: none; }
.defs { position: absolute; width: 0; height: 0; }
.i16 { width: 16px; height: 16px; }
.i14 { width: 14px; height: 14px; }
.m { font-family: var(--mono); font-size: 10px; white-space: pre; }

.desktop { position: relative; height: 100vh; overflow: hidden; }
.win { position: absolute; right: 0; bottom: 0; display: flex; flex-direction: column; overflow: hidden; background: var(--face); }
.win-back { left: 0; top: 0; bottom: 30px; }
.win-matrix { left: 82px; top: 12px; }
.win-proto { left: 82px; top: 164px; }

/* title bar */
.title { flex: none; display: flex; align-items: center; height: 18px; padding-left: 1px; background: var(--navy); color: #fff; }
.win-back .title { background: #848284; color: #d6d3ce; }
.title h1 { margin-left: 4px; font-size: 13px; font-weight: 700; line-height: 18px; white-space: pre; }
.title h1 span { font: 700 12px var(--mono); white-space: pre; }
.win-proto .marks { margin-left: -8px; z-index: 1; }
.sysbtns { display: flex; margin: 0 2px 0 auto; }
.sysbtns button { width: 16px; height: 14px; padding: 1px 2px; background: var(--face); border: 1px solid; border-color: #fff #404040 #404040 #fff; }
.sysbtns .gap { margin-left: 2px; }
.sysbtns svg { width: 10px; height: 10px; }

/* menu and main toolbar */
.menu { flex: none; display: flex; align-items: center; height: 24px; padding-left: 9px; border-top: 2px solid #fff; border-bottom: 1px solid var(--line); background: linear-gradient(#fff, #fff) 3px 4px / 1px 15px no-repeat, linear-gradient(var(--line), var(--line)) 4px 4px / 1px 15px no-repeat; }
.menu button { padding: 0 8px; white-space: nowrap; }
.menu span { font: 10px/16px var(--mono); }
.tools { flex: none; display: flex; height: 38px; padding: 4px 0 0 9px; border-top: 1px solid #fff; border-bottom: 1px solid var(--line); background: linear-gradient(#fff, #fff) 3px 4px / 1px 28px no-repeat, linear-gradient(var(--line), var(--line)) 4px 4px / 1px 28px no-repeat; }
.tools button { display: flex; flex-direction: column; align-items: center; height: 30px; padding: 0 5px; line-height: 14px; white-space: nowrap; }
.tools button:disabled { color: #9c9a96; text-shadow: 1px 1px #fff; }
hr { flex: none; width: 1px; height: 26px; margin: 0 3px 0 2px; border: 0; background: #a8a6a2; }
.drop { flex: none; width: 11px; height: 3px; margin-top: 12px; background: linear-gradient(#000, #000) 3px 0 / 5px 1px no-repeat, linear-gradient(#000, #000) 4px 1px / 3px 1px no-repeat, linear-gradient(#000, #000) 5px 2px / 1px 1px no-repeat; }
.drop.off { opacity: .4; }
.tools .drop:has(+ .more) { margin-top: 22px; }
.more { width: 11px; height: 35px; margin: -3px 0 0 -1px; background: linear-gradient(#fff, #fff) 3px 25px / 5px 1px no-repeat, linear-gradient(#000, #000) 3px 29px / 5px 1px no-repeat, linear-gradient(#000, #000) 4px 30px / 3px 1px no-repeat, linear-gradient(#000, #000) 5px 31px / 1px 1px no-repeat, linear-gradient(#dedbd8, #84827e); }

/* left side */
.work { flex: 1; display: flex; min-height: 0; }
.side { flex: none; display: flex; flex-direction: column; gap: 14px; width: 23px; padding-top: 2px; background: #d9d2d0; }
.side button { display: flex; flex-direction: column; align-items: center; gap: 2px; width: 20px; padding: 4px 0 3px; border: 1px solid var(--line); border-left: 0; border-radius: 0 4px 4px 0; background: var(--face); color: #444; }
.side span { writing-mode: vertical-rl; text-orientation: sideways; line-height: 16px; }
.panel { flex: none; display: flex; flex-direction: column; width: 114px; border: 1px solid var(--line); border-bottom: 0; }
.panel.wide { width: 200px; }
.panel h2 { flex: none; display: flex; align-items: center; height: 21px; padding-left: 5px; border-bottom: 1px solid var(--line); white-space: nowrap; }
.panel h2 .i16 { height: 14px; margin-right: 5px; }
.panel h2 .pin { width: 8px; height: 10px; margin: 0 10px 0 auto; }
.panel h2 .x { width: 8px; height: 8px; margin-right: 6px; }
.scroller { flex: 1; display: flex; flex-direction: column; min-height: 0; background: #fff; }
.scroller.row { flex-direction: row; }
.tree { flex: 1; display: flex; flex-direction: column; min-width: 0; overflow: hidden; }
.tree li { flex: none; display: flex; align-items: center; height: 16px; padding-left: 2px; white-space: nowrap; }
.tree .root { padding-left: 4px; }
.tree .root .i16 { margin: 0 4px 0 0; }
.tree li.rest { flex: 1; align-items: stretch; }
.tree i { width: 19px; height: 16px; padding: 4px 5px 0; }
.tree .rest i { height: auto; }
.tree .i16 { margin: 0 3px 0 2px; }
.tree .pc { width: 12px; height: 16px; margin-left: 5px; }
.tree .sig { width: 10px; height: 14px; margin-left: -2px; }
.tree .local { margin-left: 10px; }
i { flex: none; }
.v { background: repeating-linear-gradient(#888 0 1px, transparent 1px 2px) 9px 0 / 1px 100% no-repeat; }
.t { background: repeating-linear-gradient(#888 0 1px, transparent 1px 2px) 9px 0 / 1px 100% no-repeat, repeating-linear-gradient(90deg, #888 0 1px, transparent 1px 2px) 9px 8px / 12px 1px no-repeat; }
.l { background: repeating-linear-gradient(#888 0 1px, transparent 1px 2px) 9px 0 / 1px 8px no-repeat, repeating-linear-gradient(90deg, #888 0 1px, transparent 1px 2px) 9px 8px / 12px 1px no-repeat; }
.ex { display: block; width: 9px; height: 9px; border: 1px solid #848284; background: linear-gradient(#000, #000) 1px 3px / 5px 1px no-repeat, #fff; }
.ex.plus { background: linear-gradient(#000, #000) 1px 3px / 5px 1px no-repeat, linear-gradient(#000, #000) 3px 1px / 1px 5px no-repeat, #fff; }
.vscroll, .hscroll { flex: none; display: flex; background: #ebe9e6; }
.vscroll { flex-direction: column; width: 16px; }
.hscroll { height: 16px; }
.arrow, .thumb { background: var(--face); border: 1px solid; border-color: #fff #404040 #404040 #fff; }
.arrow { flex: none; display: grid; place-items: center; width: 16px; height: 16px; }
.arrow svg { width: 8px; height: 8px; }
.vscroll .thumb { height: 78%; }
.hscroll .thumb { width: 35px; }
.status { flex: none; height: 23px; padding-left: 2px; line-height: 24px; background: #d9d2d0; }
.taskbar { position: absolute; left: 0; right: 0; bottom: 0; display: flex; align-items: center; height: 30px; padding-left: 2px; border-top: 1px solid #fff; background: #d9d2d0; }
.start { display: flex; align-items: center; gap: 2px; height: 22px; padding: 0 2px; border: 1px solid; border-color: #fff #404040 #404040 #fff; background: var(--face); }
.handle { width: 2px; height: 20px; margin: 0 7px; border-left: 1px solid var(--line); border-right: 1px solid #fff; }

/* main pane */
.pane { flex: 1; display: flex; flex-direction: column; min-width: 0; margin-left: 7px; border: 1px solid var(--line); border-width: 1px 0 0 1px; }
.tabs { flex: none; display: flex; height: 21px; padding: 2px 0 0 5px; background: linear-gradient(var(--line), var(--line)) 0 100% / 100% 1px no-repeat; }
.tabs button { height: 18px; padding: 0 6px 0 5px; border: 1px solid var(--line); border-width: 1px 1px 0 0; border-radius: 0 4px 0 0; line-height: 16px; white-space: nowrap; }
.tabs .first { position: relative; padding-left: 20px; }
.tabs .sel { position: relative; height: 19px; font-weight: 700; background: var(--face); border-right-color: #fff; }
.slant { position: absolute; left: -18px; top: -1px; width: 24px; height: 19px; }
.first .slant { left: -4px; }
.bar2 { flex: none; display: flex; align-items: center; height: 28px; padding-left: 8px; border-bottom: 1px solid var(--line); }
.bar2 hr { height: 16px; margin: 0 6px 0 4px; }
.bar2 .drop { margin-top: 0; }
.bar2 span { margin: 0 4px 0 2px; }
.bar2 svg + svg { margin-left: 5px; }
.bar2 .drop + svg { margin-left: 3px; }
.addr { flex: none; width: 97px; height: 22px; margin-left: auto; padding-left: 6px; overflow: hidden; border: 1px solid #8c9cac; border-right: 0; background: #efeaee; font: 700 12px/20px var(--mono); white-space: nowrap; }
.addr.short { width: 71px; }
.bar2 label { margin: 0 5px 0 -2px; }
.bar2 select { width: 100px; height: 19px; padding: 0 1px; border: 1px solid #fff; border-radius: 0; appearance: none; font: inherit; background: linear-gradient(#000, #000) 90px 8px / 5px 1px no-repeat, linear-gradient(#000, #000) 91px 9px / 3px 1px no-repeat, linear-gradient(#000, #000) 92px 10px / 1px 1px no-repeat, linear-gradient(var(--face), var(--face)) 87px 0 / 11px 100% no-repeat, #fff; }
.split { flex: 1; display: flex; min-height: 0; }
.mtype { flex: none; display: flex; justify-content: space-between; width: 220px; padding: 4px 17px 0 5px; border-right: 1px solid var(--line); background: #fff; font-weight: 700; }
.chev { width: 8px; height: 8px; margin-top: 6px; }
.matrix { flex: 1; display: flex; min-width: 0; margin-left: 3px; overflow: hidden; border-left: 1px solid var(--line); background: #fff; }
.hosts { flex: none; width: 49px; margin-top: -5px; overflow: hidden; font: 11px/13px "Liberation Sans", sans-serif; }
.hosts.right { width: 126px; text-align: right; }
.lines { flex: 1; min-width: 0; height: 22px; margin: 0 5px 0 12px; }

/* protocol table */
.gridwrap { flex: 1; background: #fff; overflow: hidden; }
table { width: 100%; table-layout: fixed; border-collapse: separate; border-spacing: 0; font: 10px/16px var(--mono); }
.c1 { width: 200px; }
.c2 { width: 280px; }
.c3 { width: 80px; }
th { height: 16px; padding: 0 6px 0 0; border-right: 1px solid var(--line); border-bottom: 1px solid var(--line); background: var(--face); font: 12px/15px "Noto Sans CJK SC", sans-serif; text-align: right; white-space: nowrap; }
th:first-child { padding-left: 6px; text-align: left; }
th:last-child { padding-right: 3px; border-right: 0; }
.sort { display: inline-block; width: 8px; height: 8px; margin: 0 4px 0 2px; }
td { height: 17px; padding: 0 4px 0 0; border-right: 1px solid #c6c3bd; border-bottom: 1px solid #c6c3bd; color: var(--c); text-align: right; white-space: pre; }
td:nth-child(n+3) { padding-right: 6px; }
td:last-child { padding-right: 4px; border-right: 0; }
td:nth-child(1), td:nth-child(2) { padding: 0; }
.n { display: flex; align-items: center; height: 16px; padding-left: 4px; }
.n i { width: 20px; height: 16px; padding: 3px 5px 0; }
.n .i16 { margin: 0 0 0 2px; }
.n .ex { border-radius: 1px; background-color: #f0efec; }
.cur td { background: #adaad6; border-bottom-color: #848284; }
.meter { display: grid; margin: 0 2px 0 1px; }
.meter > * { grid-area: 1 / 1; }
.meter s { min-width: 1px; height: 14px; margin-top: 1px; background: var(--c); }
.meter span { padding-right: 2px; }
.meter.in span { color: #e8f4ec; }
.cur .meter.in span { color: #a8d0b4; }
.meter.part span { color: transparent; background: linear-gradient(90deg, #fff var(--w), var(--c) 0); -webkit-background-clip: text; background-clip: text; }
.k-green { --c: #007921; }
.k-teal { --c: #009a9c; }
.k-blue { --c: #0065ce; }
.k-navy { --c: #00309c; }
.k-violet { --c: #736de0; }
.k-wine { --c: #7b0039; }
.k-sky { --c: #4299de; }
.k-red { --c: #de3c21; }
.k-orchid { --c: #c671de; }
.k-slate { --c: #6b5d9c; }
.k-azure { --c: #1861bd; }
.k-forest { --c: #105d10; }
.k-gold { --c: #ce9a00; }
.k-magenta { --c: #bd10b5; }
.k-lilac { --c: #a5a2e7; }
.k-pink { --c: #de79c6; }
```
